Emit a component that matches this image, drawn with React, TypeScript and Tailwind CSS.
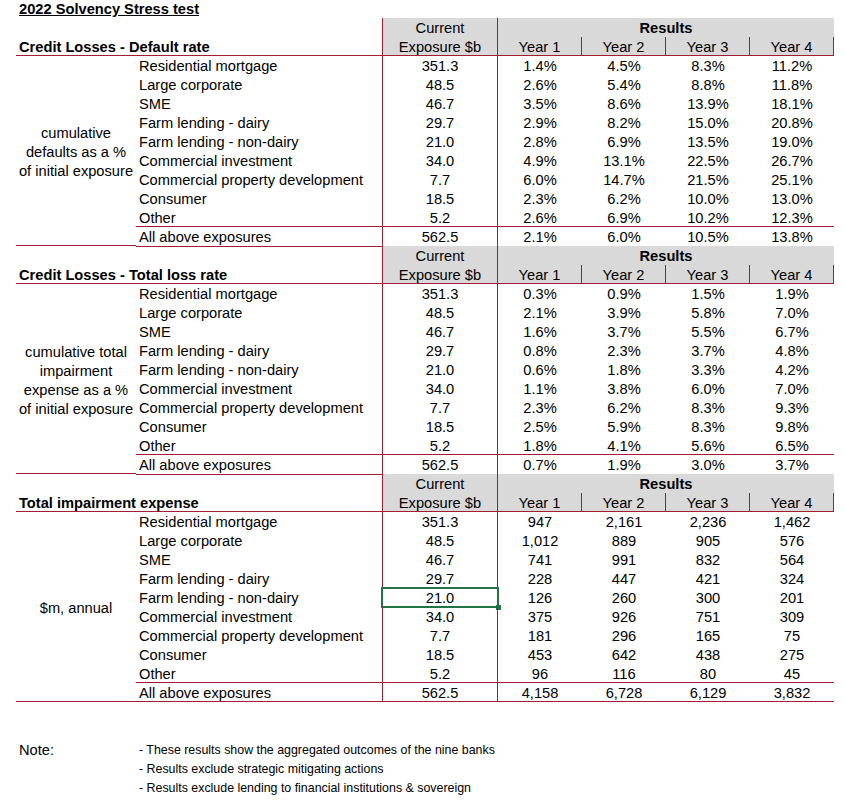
import React from "react";

type Row = { label: string; exp: string; vals: string[] };

const LABELS = [
  "Residential mortgage",
  "Large corporate",
  "SME",
  "Farm lending - dairy",
  "Farm lending - non-dairy",
  "Commercial investment",
  "Commercial property development",
  "Consumer",
  "Other",
  "All above exposures",
];
const EXPO = ["351.3", "48.5", "46.7", "29.7", "21.0", "34.0", "7.7", "18.5", "5.2", "562.5"];

const mk = (vals: string[][]): Row[] =>
  LABELS.map((l, i) => ({ label: l, exp: EXPO[i], vals: vals[i] }));

const s1 = mk([
  ["1.4%", "4.5%", "8.3%", "11.2%"],
  ["2.6%", "5.4%", "8.8%", "11.8%"],
  ["3.5%", "8.6%", "13.9%", "18.1%"],
  ["2.9%", "8.2%", "15.0%", "20.8%"],
  ["2.8%", "6.9%", "13.5%", "19.0%"],
  ["4.9%", "13.1%", "22.5%", "26.7%"],
  ["6.0%", "14.7%", "21.5%", "25.1%"],
  ["2.3%", "6.2%", "10.0%", "13.0%"],
  ["2.6%", "6.9%", "10.2%", "12.3%"],
  ["2.1%", "6.0%", "10.5%", "13.8%"],
]);
const s2 = mk([
  ["0.3%", "0.9%", "1.5%", "1.9%"],
  ["2.1%", "3.9%", "5.8%", "7.0%"],
  ["1.6%", "3.7%", "5.5%", "6.7%"],
  ["0.8%", "2.3%", "3.7%", "4.8%"],
  ["0.6%", "1.8%", "3.3%", "4.2%"],
  ["1.1%", "3.8%", "6.0%", "7.0%"],
  ["2.3%", "6.2%", "8.3%", "9.3%"],
  ["2.5%", "5.9%", "8.3%", "9.8%"],
  ["1.8%", "4.1%", "5.6%", "6.5%"],
  ["0.7%", "1.9%", "3.0%", "3.7%"],
]);
const s3 = mk([
  ["947", "2,161", "2,236", "1,462"],
  ["1,012", "889", "905", "576"],
  ["741", "991", "832", "564"],
  ["228", "447", "421", "324"],
  ["126", "260", "300", "201"],
  ["375", "926", "751", "309"],
  ["181", "296", "165", "75"],
  ["453", "642", "438", "275"],
  ["96", "116", "80", "45"],
  ["4,158", "6,728", "6,129", "3,832"],
]);

const YEAR_COLS = ["col-start-5", "col-start-6", "col-start-7", "col-start-8"];

function Section({
  title,
  side,
  rows,
  last,
  selected,
}: {
  title: string;
  side: string[];
  rows: Row[];
  last?: boolean;
  selected?: number;
}) {
  return (
    <div className="flex flex-col">
      <div className="grid grid-cols-[16px_120px_246px_116px_84px_84px_84px_84px] grid-rows-[19px_19px]">
        <div className="col-start-2 col-span-2 row-start-2 border-b border-[#a11d2f] pl-[3px] pt-[2px] leading-[16px] font-bold">
          {title}
        </div>
        <div className="col-start-4 row-start-1 row-span-2 bg-[#d9d9d9] border-l border-r border-b border-[#a11d2f] pt-[1px] flex flex-col items-center">
          <span>Current</span>
          <span>Exposure $b</span>
        </div>
        <div className="col-start-5 col-span-4 row-start-1 bg-[#d9d9d9] text-center pt-[2px] leading-[17px] font-bold">
          Results
        </div>
        {["Year 1", "Year 2", "Year 3", "Year 4"].map((y, i) => (
          <div
            key={y}
            className={`${YEAR_COLS[i]} row-start-2 bg-[#d9d9d9] border-r border-b border-[#a11d2f] pt-[2px] leading-[16px] text-center`}
          >
            {y}
          </div>
        ))}
      </div>
      <div className="flex">
        <div className="ml-[16px] w-[120px] h-[190px] pt-[4px] border-b border-[#a11d2f] flex flex-col items-center justify-center text-center">
          {side.map((s) => (
            <span key={s}>{s}</span>
          ))}
        </div>
        <div className="flex flex-col w-[698px]">
          {rows.map((r, i) => {
            const isOther = i === 8;
            const isTotal = i === 9;
            const rowBorder = isOther || (isTotal && last) ? "border-b border-[#a11d2f]" : "";
            return (
              <div
                key={r.label}
                className={`grid grid-cols-[246px_116px_84px_84px_84px_84px] h-[19px] leading-[17px] ${rowBorder}`}
              >
                <div
                  className={`pl-[3px] pt-[2px] whitespace-nowrap ${
                    isTotal && !last ? "border-b border-[#a11d2f]" : ""
                  }`}
                >
                  {r.label}
                </div>
                <div className="relative border-l border-r border-[#a11d2f] pt-[2px] text-center">
                  {r.exp}
                  {selected === i && (
                    <>
                      <div className="absolute -left-[2px] -right-[2px] -top-px -bottom-px border-2 border-[#217346]" />
                      <div className="absolute -right-[4px] -bottom-[3px] w-[5px] h-[5px] bg-[#217346]" />
                    </>
                  )}
                </div>
                {r.vals.map((v, j) => (
                  <div key={j} className="pt-[2px] text-center">
                    {v}
                  </div>
                ))}
              </div>
            );
          })}
        </div>
      </div>
    </div>
  );
}

export default function App() {
  return (
    <div className="w-[846px] h-[804px] bg-white text-black font-['Liberation_Sans',Arial,sans-serif] text-[14.67px] leading-[19px] overflow-hidden">
      <div className="h-[18px] pl-[19px] pt-[1px] leading-[17px] font-bold">
        <span className="underline">2022 Solvency Stress test</span>
      </div>
      <Section
        title="Credit Losses - Default rate"
        side={["cumulative", "defaults as a %", "of initial exposure"]}
        rows={s1}
      />
      <Section
        title="Credit Losses - Total loss rate"
        side={["cumulative total", "impairment", "expense as a %", "of initial exposure"]}
        rows={s2}
      />
      <Section title="Total impairment expense" side={["$m, annual"]} rows={s3} last selected={4} />
      <div className="h-[38px]" />
      <div className="flex pt-[1px]">
        <div className="w-[136px] pl-[19px]">Note:</div>
        <div className="flex flex-col pl-[3px] text-[12.4px]">
          <span className="h-[19px]">- These results show the aggregated outcomes of the nine banks</span>
          <span className="h-[19px]">- Results exclude strategic mitigating actions</span>
          <span className="h-[19px]">- Results exclude lending to financial institutions &amp; sovereign</span>
        </div>
      </div>
    </div>
  );
}
